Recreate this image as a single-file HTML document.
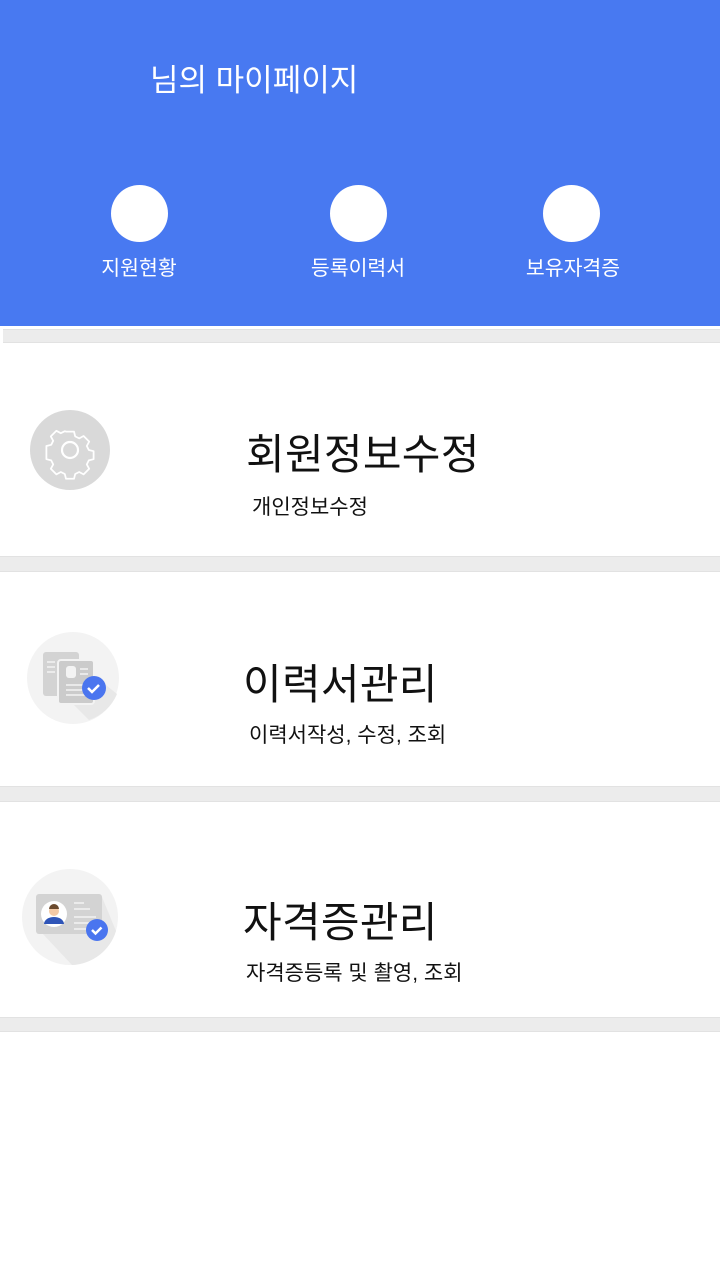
<!DOCTYPE html>
<html><head><meta charset="utf-8"><style>
*{margin:0;padding:0;box-sizing:border-box}
body{width:720px;height:1280px;background:#fff;font-family:"Liberation Sans","Noto Sans CJK KR",sans-serif;position:relative;overflow:hidden}
.a{position:absolute}
.hdr{left:0;top:0;width:720px;height:326px;background:#4879f1}
.c{width:57px;height:57px;border-radius:50%;background:#fff}
.lbl{color:#fff;font-size:20.5px;width:160px;text-align:center}
.strip{background:#ececec;left:0;width:720px;border-top:1px solid #e2e2e2;border-bottom:1px solid #e2e2e2}
.t{font-size:42px;color:#111;letter-spacing:0.3px}
.s{font-size:21px;color:#111}
</style></head><body>
<div class="a hdr"></div>
<div class="a" style="left:150px;top:55px;color:#fff;font-size:31px">님의 마이페이지</div>
<div class="a c" style="left:111px;top:185px"></div>
<div class="a c" style="left:330px;top:185px"></div>
<div class="a c" style="left:543px;top:185px"></div>
<div class="a lbl" style="left:59px;top:251px">지원현황</div>
<div class="a lbl" style="left:278px;top:251px">등록이력서</div>
<div class="a lbl" style="left:493px;top:251px">보유자격증</div>

<div class="a strip" style="top:329px;height:14px;left:3px"></div>
<div class="a strip" style="top:556px;height:16px"></div>
<div class="a strip" style="top:786px;height:16px"></div>
<div class="a strip" style="top:1017px;height:15px"></div>

<svg class="a" style="left:30px;top:410px" width="80" height="80" viewBox="0 0 80 80">
<circle cx="40" cy="40" r="40" fill="#d9d9d9"/>
<g fill="none" stroke="#fff" stroke-width="2.2" stroke-linejoin="round">
<path d="M35 17h10l1.5 6 5 2.5 5.5-3 7 7-3 5.5 2.5 5 6 1.5v10l-6 1.5-2.5 5 3 5.5-7 7-5.5-3-5 2.5-1.5 6H35l-1.5-6-5-2.5-5.5 3-7-7 3-5.5-2.5-5-6-1.5V40v-5l6-1.5 2.5-5-3-5.5 7-7 5.5 3 5-2.5z" transform="translate(40 40) scale(.8) translate(-40 -40)"/>
<circle cx="40" cy="40" r="8"/></g></svg>
<div class="a t" style="left:246px;top:421px">회원정보수정</div>
<div class="a s" style="left:252px;top:491px">개인정보수정</div>

<svg class="a" style="left:27px;top:632px" width="92" height="92" viewBox="0 0 92 92">
<circle cx="46" cy="46" r="46" fill="#f3f3f3"/>
<path d="M48 28 L90 62 A46 46 0 0 1 62 88 L34 60z" fill="#e8e8e8"/>
<rect x="16" y="20" width="36" height="44" rx="3" fill="#d3d3d3"/>
<rect x="31" y="28" width="36" height="44" rx="3" fill="#cbcbcb" stroke="#f3f3f3" stroke-width="2"/>
<rect x="39" y="34" width="10" height="12" rx="3" fill="#f3f3f3"/>
<g stroke="#f3f3f3" stroke-width="1.5"><path d="M53 37h8M53 42h8M39 53h22M39 58h22M39 63h22M20 30h8M20 35h8M20 40h8"/></g>
<circle cx="67" cy="56" r="12" fill="#4a75ef"/>
<path d="M61 56l4 4 7-7" fill="none" stroke="#fff" stroke-width="2.5"/></svg>
<div class="a t" style="left:243px;top:651px">이력서관리</div>
<div class="a s" style="left:249px;top:719px">이력서작성, 수정, 조회</div>

<svg class="a" style="left:22px;top:869px" width="96" height="96" viewBox="0 0 96 96">
<circle cx="48" cy="48" r="48" fill="#f3f3f3"/>
<path d="M80 28 L94 62 A48 48 0 0 1 50 96 L20 64z" fill="#e8e8e8"/>
<rect x="14" y="25" width="66" height="40" rx="3" fill="#d3d3d3"/>
<circle cx="32" cy="45" r="13" fill="#fff"/>
<circle cx="32" cy="42" r="5" fill="#f3c9a5"/>
<path d="M27 40a5 5 0 0 1 10 0" fill="#6b4a2e"/>
<path d="M22 55a10 7 0 0 1 20 0z" fill="#2f55b8"/>
<g stroke="#f3f3f3" stroke-width="1.5"><path d="M52 34h10M52 40h16M52 48h22M52 54h22M52 60h16"/></g>
<circle cx="75" cy="61" r="11" fill="#4a75ef"/>
<path d="M70 61l3.5 3.5 6-6" fill="none" stroke="#fff" stroke-width="2.5"/></svg>
<div class="a t" style="left:243px;top:889px">자격증관리</div>
<div class="a s" style="left:246px;top:957px">자격증등록 및 촬영, 조회</div>
</body></html>
